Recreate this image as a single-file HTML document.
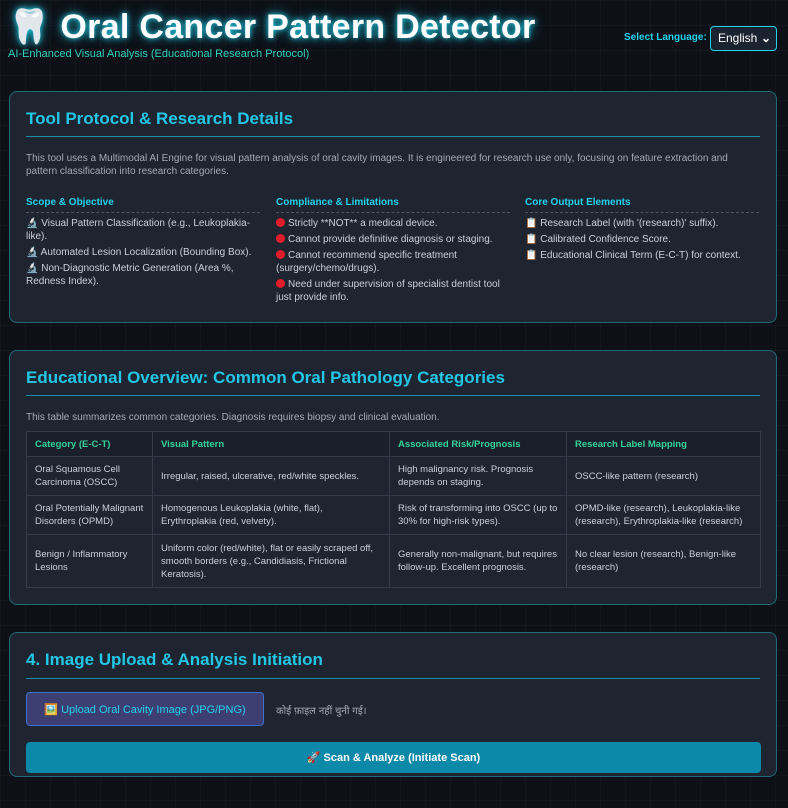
<!DOCTYPE html>
<html><head><meta charset="utf-8"><style>
*{box-sizing:border-box;margin:0;padding:0}
body{width:788px;height:808px;overflow:hidden;background:#0d1017;background-image:linear-gradient(rgba(255,255,255,.025) 1px,transparent 1px),linear-gradient(90deg,rgba(255,255,255,.025) 1px,transparent 1px);background-size:25px 25px;font-family:"Liberation Sans","Noto Sans CJK SC",sans-serif;color:#c9d1d9;position:relative}
.abs{position:absolute}
h1{position:absolute;left:8px;top:7px;font-size:34px;font-weight:bold;color:#fff;text-shadow:0 0 6px #22d3ee,0 0 12px rgba(34,211,238,.6);white-space:nowrap;letter-spacing:.3px}
.sub{left:8px;top:48px;font-size:11px;color:#2dd4bf}
.lang{left:624px;top:32px;font-size:10px;font-weight:bold;color:#22d3ee}
.sel{left:710px;top:26px;width:67px;height:25px;border:1px solid #22d3ee;border-radius:4px;background:#1b2230;color:#fff;font-size:12px;padding:4px 0 0 7px}
.panel{position:absolute;left:9px;width:768px;background:#1e2430;border:1px solid #1d6b76;border-radius:8px}
h2{position:absolute;left:16px;font-size:17px;font-weight:bold;color:#22c7e6}
.hr{position:absolute;left:16px;width:734px;height:1px;background:#1b8fa5}
.txt{font-size:10px;color:#a3abb8;line-height:13px}
.col{position:absolute;top:105px;width:234px}
.col h4{font-size:10px;color:#22d3ee;font-weight:bold;border-bottom:1px dashed #4a5566;padding-bottom:4px;margin-bottom:4px}
.col p{font-size:10px;color:#c9d1d9;line-height:13px;margin-bottom:3px}
table{position:absolute;left:16px;top:80px;width:735px;border-collapse:collapse;font-size:9.5px;color:#c9d1d9}
td,th{border:1px solid #333c4b;padding:4px 8px;text-align:left;line-height:13px;vertical-align:middle}
th{color:#34d399;font-weight:bold;height:25px;background:#1a202b}
.dot{display:inline-block;width:9px;height:9px;border-radius:50%;background:#e11d2a;vertical-align:-1px;margin-right:3px}
</style></head><body>
<h1>🦷 Oral Cancer Pattern Detector</h1>
<div class="abs sub">AI-Enhanced Visual Analysis (Educational Research Protocol)</div>
<div class="abs lang">Select Language:</div>
<div class="abs sel">English <span style="float:right;margin-right:5px;font-size:12px;font-weight:bold">⌄</span></div>

<div class="panel" style="top:91px;height:232px">
<h2 style="top:17px">Tool Protocol &amp; Research Details</h2>
<div class="hr" style="top:44px"></div>
<div class="abs txt" style="left:16px;top:60px;width:718px">This tool uses a Multimodal AI Engine for visual pattern analysis of oral cavity images. It is engineered for research use only, focusing on feature extraction and pattern classification into research categories.</div>
<div class="col" style="left:16px"><h4>Scope &amp; Objective</h4>
<p>🔬 Visual Pattern Classification (e.g., Leukoplakia-like).</p><p>🔬 Automated Lesion Localization (Bounding Box).</p><p>🔬 Non-Diagnostic Metric Generation (Area %, Redness Index).</p></div>
<div class="col" style="left:266px"><h4>Compliance &amp; Limitations</h4>
<p><span class="dot"></span>Strictly **NOT** a medical device.</p><p><span class="dot"></span>Cannot provide definitive diagnosis or staging.</p><p><span class="dot"></span>Cannot recommend specific treatment (surgery/chemo/drugs).</p><p><span class="dot"></span>Need under supervision of specialist dentist tool just provide info.</p></div>
<div class="col" style="left:515px"><h4>Core Output Elements</h4>
<p>📋 Research Label (with '(research)' suffix).</p><p>📋 Calibrated Confidence Score.</p><p>📋 Educational Clinical Term (E-C-T) for context.</p></div>
</div>

<div class="panel" style="top:350px;height:255px">
<h2 style="top:17px">Educational Overview: Common Oral Pathology Categories</h2>
<div class="hr" style="top:44px"></div>
<div class="abs txt" style="left:16px;top:60px">This table summarizes common categories. Diagnosis requires biopsy and clinical evaluation.</div>
<table>
<tr><th style="width:126px">Category (E-C-T)</th><th style="width:237px">Visual Pattern</th><th style="width:177px">Associated Risk/Prognosis</th><th>Research Label Mapping</th></tr>
<tr style="height:39px"><td>Oral Squamous Cell Carcinoma (OSCC)</td><td>Irregular, raised, ulcerative, red/white speckles.</td><td>High malignancy risk. Prognosis depends on staging.</td><td>OSCC-like pattern (research)</td></tr>
<tr style="height:39px"><td>Oral Potentially Malignant Disorders (OPMD)</td><td>Homogenous Leukoplakia (white, flat),<br>Erythroplakia (red, velvety).</td><td>Risk of transforming into OSCC (up to 30% for high-risk types).</td><td>OPMD-like (research), Leukoplakia-like (research), Erythroplakia-like (research)</td></tr>
<tr style="height:53px"><td>Benign / Inflammatory Lesions</td><td>Uniform color (red/white), flat or easily scraped off, smooth borders (e.g., Candidiasis, Frictional Keratosis).</td><td>Generally non-malignant, but requires follow-up. Excellent prognosis.</td><td>No clear lesion (research), Benign-like (research)</td></tr>
</table>
</div>

<div class="panel" style="top:632px;height:145px">
<h2 style="top:17px">4. Image Upload &amp; Analysis Initiation</h2>
<div class="hr" style="top:45px"></div>
<div class="abs" style="left:16px;top:59px;width:238px;height:34px;background:#3d3f72;border:1px solid #3b6fd0;border-radius:4px;color:#22d3ee;font-size:11px;padding-top:10px;text-align:center">🖼️ Upload Oral Cavity Image (JPG/PNG)</div>
<div class="abs" style="left:266px;top:70px;font-size:10px;color:#a3abb8">कोई फ़ाइल नहीं चुनी गई।</div>
<div class="abs" style="left:16px;top:109px;width:735px;height:31px;background:#0c89a8;border-radius:4px;color:#fff;font-weight:bold;font-size:11px;text-align:center;padding-top:9px">🚀 Scan &amp; Analyze (Initiate Scan)</div>
</div>
</body></html>
